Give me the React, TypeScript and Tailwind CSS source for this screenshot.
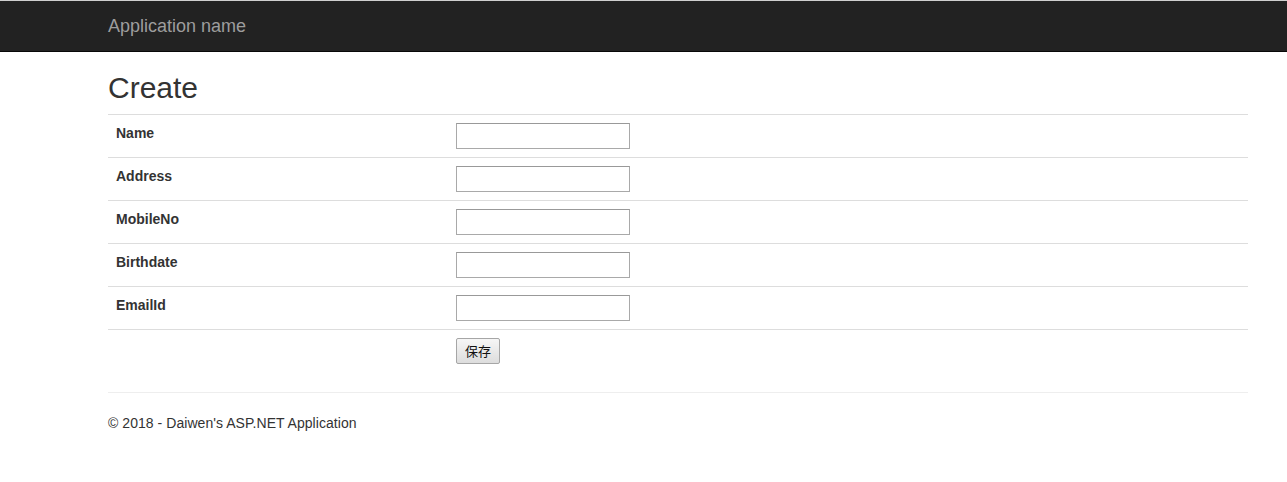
import React from "react";

const fields = ["Name", "Address", "MobileNo", "Birthdate", "EmailId"];

export default function App() {
  return (
    <div className="min-h-[482px] bg-white text-[14px] leading-[20px] text-[#333]" style={{ fontFamily: '"Liberation Sans", Arial, sans-serif' }}>
      <div className="h-[52px] border-t border-t-[#cfcfcf] border-b border-b-[#080808] bg-[#222]">
        <div className="pl-[108px] pt-[15px] text-[18px] leading-[20px] text-[#9d9d9d]">Application name</div>
      </div>
      <div className="ml-[108px] w-[1140px]">
        <h2 className="mt-[19px] mb-[10px] text-[30px] leading-[33px] font-normal">Create</h2>
        <table className="mb-[20px] w-full border-collapse">
          <tbody>
            {fields.map((f) => (
              <tr key={f} className="border-t border-[#ddd]">
                <td className="w-[340px] p-[8px] align-top font-bold">{f}</td>
                <td className="p-[8px] align-top">
                  <input type="text" className="block h-[26px] w-[174px] border border-[#a9a9a9] border-t-[#999] bg-white" />
                </td>
              </tr>
            ))}
            <tr className="border-t border-[#ddd]">
              <td className="p-[8px]"></td>
              <td className="p-[8px] align-top">
                <button
                  type="button"
                  className="block h-[26px] w-[44px] rounded-[2px] border border-[#a6a6a6] bg-gradient-to-b from-[#f6f6f6] to-[#dddddd] text-[13px] leading-[24px] text-[#111]"
                  style={{ fontFamily: '"Noto Sans CJK SC", sans-serif' }}
                >
                  保存
                </button>
              </td>
            </tr>
          </tbody>
        </table>
        <hr className="border-0 border-t border-[#eee]" />
        <p className="mt-[20px] tracking-[0.05px]">© 2018 - Daiwen's ASP.NET Application</p>
      </div>
    </div>
  );
}
